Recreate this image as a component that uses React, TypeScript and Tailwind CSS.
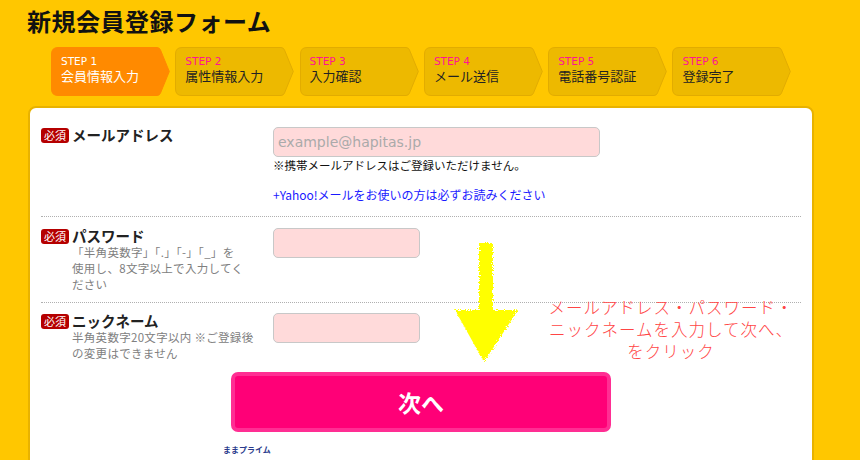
import React from "react";

const JP = '"Noto Sans CJK JP", "Noto Sans", "Liberation Sans", sans-serif';

const steps = [
  { n: "STEP 1", label: "会員情報入力", active: true },
  { n: "STEP 2", label: "属性情報入力" },
  { n: "STEP 3", label: "入力確認" },
  { n: "STEP 4", label: "メール送信" },
  { n: "STEP 5", label: "電話番号認証" },
  { n: "STEP 6", label: "登録完了" },
];

function Step({ n, label, active }: { n: string; label: string; active?: boolean }) {
  return (
    <div className="relative w-[119px] h-[49px] shrink-0">
      <svg className="absolute inset-0" width="119" height="49" viewBox="0 0 119 49">
        <path
          d="M7,0.5 H106 Q108.5,0.5 109.5,3 L118.3,24.5 L109.5,46 Q108.5,48.5 106,48.5 H7 Q0.5,48.5 0.5,42 V7 Q0.5,0.5 7,0.5 Z"
          fill={active ? "#FF8A00" : "#EDB900"}
          stroke={active ? "#FF8A00" : "#E2AC00"}
          strokeWidth="1"
        />
      </svg>
      <div className="relative pl-[10px] pt-[8px]">
        <div
          className={
            "text-[10.5px] leading-[13px] " + (active ? "text-white" : "text-[#FF1493]")
          }
          style={{ fontFamily: '"DejaVu Sans", "Liberation Sans", sans-serif' }}
        >
          {n}
        </div>
        <div className={"text-[13px] leading-[16px] " + (active ? "text-white" : "text-[#222]")}>
          {label}
        </div>
      </div>
    </div>
  );
}

function Badge() {
  return (
    <span className="mt-[1px] inline-flex h-[15px] w-[28px] shrink-0 items-center justify-center rounded-[3px] bg-[#B50000] text-[11px] leading-none text-white">
      必須
    </span>
  );
}

function Label({ title, desc }: { title: string; desc?: string[] }) {
  return (
    <div className="w-[232px] shrink-0">
      <div className="flex items-start gap-[3px]">
        <Badge />
        <div className="text-[14.5px] font-bold leading-[16px] text-[#222]">{title}</div>
      </div>
      {desc && (
        <div className="ml-[31px] whitespace-nowrap text-[11.5px] leading-[16px] tracking-[0.3px] text-[#808080]">
          {desc.map((d, i) => (
            <div key={i}>{d}</div>
          ))}
        </div>
      )}
    </div>
  );
}

export default function App() {
  return (
    <div
      className="relative h-[460px] w-[860px] overflow-hidden bg-[#FFC700]"
      style={{ fontFamily: JP }}
    >
      <div className="pl-[27px] pt-[5px]">
        <h1 className="text-[24px] font-bold leading-[32px] tracking-[0.5px] text-[#111]">
          新規会員登録フォーム
        </h1>
      </div>

      <div className="ml-[51px] mt-[10px] flex gap-[5.3px]">
        {steps.map((s) => (
          <Step key={s.n} {...s} />
        ))}
      </div>

      <div className="ml-[28px] mt-[10px] h-[400px] w-[786px] rounded-[8px] border-2 border-[#E8B200] bg-white px-[11px]">
        {/* Row 1 */}
        <div className="flex border-b border-dotted border-[#b0b0b0] pb-[13px] pt-[19px]">
          <Label title="メールアドレス" />
          <div>
            <div className="flex h-[30px] w-[327px] items-center rounded-[5px] border border-[#c8c8c8] bg-[#FFDADA] px-[4px] text-[14px] text-[#aaa]"
              style={{ fontFamily: '"DejaVu Sans", "Liberation Sans", sans-serif' }}>
              example@hapitas.jp
            </div>
            <div className="text-[11.5px] leading-[16px] text-[#111]">
              ※携帯メールアドレスはご登録いただけません。
            </div>
            <div className="mt-[14px] text-[12px] leading-[16px] text-[#1a1aff]">
              +Yahoo!メールをお使いの方は必ずお読みください
            </div>
          </div>
        </div>

        {/* Row 2 */}
        <div className="flex border-b border-dotted border-[#b0b0b0] pb-[10px] pt-[11px]">
          <Label
            title="パスワード"
            desc={["「半角英数字」「.」「-」「_」を", "使用し、8文字以上で入力してく", "ださい"]}
          />
          <div className="h-[30px] w-[147px] rounded-[5px] border border-[#c8c8c8] bg-[#FFDADA]" />
        </div>

        {/* Row 3 */}
        <div className="flex pt-[10px]">
          <Label title="ニックネーム" desc={["半角英数字20文字以内 ※ご登録後", "の変更はできません"]} />
          <div className="h-[30px] w-[147px] rounded-[5px] border border-[#c8c8c8] bg-[#FFDADA]" />
        </div>

        <div className="mx-auto mt-[11px] flex h-[60px] w-[380px] items-center justify-center rounded-[7px] border-[4px] border-[#FF2E93] bg-[#FF0077] text-[23px] font-bold text-white">
          次へ
        </div>

        <div className="ml-[182px] mt-[13px] text-[8px] font-bold leading-[10px] text-[#2a3a8c]">
          ままプライム
        </div>
      </div>

      {/* yellow hand-drawn arrow */}
      <svg
        className="absolute left-[450px] top-[238px]"
        width="72"
        height="130"
        viewBox="0 0 72 130"
      >
        <defs>
          <filter id="rough" x="-10%" y="-10%" width="120%" height="120%">
            <feTurbulence type="fractalNoise" baseFrequency="0.8" numOctaves="2" seed="3" />
            <feDisplacementMap in="SourceGraphic" scale="5" />
          </filter>
        </defs>
        <g filter="url(#rough)" fill="#FFFF00">
          <rect x="29" y="5" width="14" height="72" />
          <polygon points="5,72 68,72 34,124" />
        </g>
      </svg>

      {/* annotation */}
      <div className="absolute left-[530px] top-[296px] w-[282px] text-center text-[16.5px] font-light leading-[22px] tracking-[1px] text-[#FF4545]">
        メールアドレス・パスワード・
        <br />
        ニックネームを入力して次へ、
        <br />
        をクリック
      </div>
    </div>
  );
}
